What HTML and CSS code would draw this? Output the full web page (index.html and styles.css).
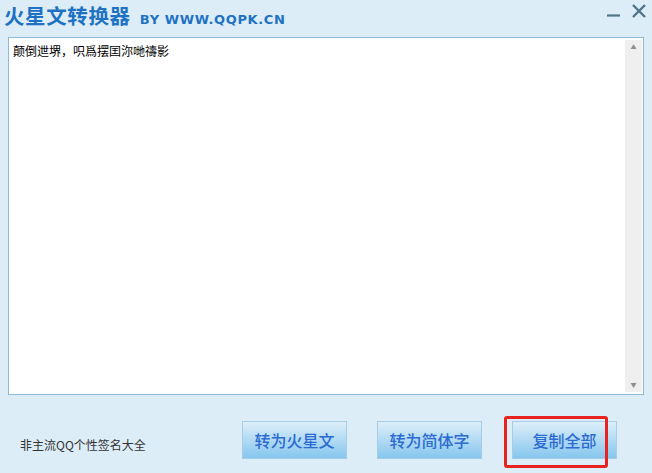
FILE: index.html
```html
<!DOCTYPE html>
<html lang="zh-CN">
<head>
    <meta charset="UTF-8">
    <title>火星文转换器</title>
    <link rel="stylesheet" href="styles.css">
</head>
<body>

<div class="window">
    <div class="titlebar">
        <h1 class="title">火星文转换器 <span class="site">BY WWW.QQPK.CN</span></h1>
        <div class="controls">
            <svg class="ctl" width="16" height="16" viewBox="0 0 16 16">
                <path d="M1 12.5 H14" stroke="#4f7586" stroke-width="2.2"/>
            </svg>
            <svg class="ctl" width="16" height="16" viewBox="0 0 16 16">
                <path d="M2 2 L14 14 M14 2 L2 14" stroke="#4f7586" stroke-width="2.4"/>
            </svg>
        </div>
    </div>

    <div class="editor">
        <div class="text">颠倒迣堺，呮爲摆囯沵哋禱影</div>
        <div class="scrollbar">
            <span class="arrow">▲</span>
            <span class="arrow">▼</span>
        </div>
    </div>

    <div class="footer">
        <span class="link">非主流QQ个性签名大全</span>
        <div class="buttons">
            <button class="btn">转为火星文</button>
            <button class="btn">转为简体字</button>
            <div class="marked">
                <button class="btn">复制全部</button>
                <div class="highlight"></div>
            </div>
        </div>
    </div>
</div>

</body>
</html>
```

FILE: styles.css
```css
body {
    margin: 0;
    background-color: #dcedf8;
    font-family: "Noto Sans CJK SC", "DejaVu Sans", sans-serif;
}

.window {
    width: 652px;
    height: 473px;
    display: flex;
    flex-direction: column;
}

.titlebar {
    height: 37px;
    display: flex;
    justify-content: space-between;
    align-items: flex-start;
}

.title {
    margin: 0;
    padding-left: 4px;
    font-size: 20.5px;
    line-height: 30px;
    font-weight: bold;
    color: #1f72c2;
    letter-spacing: 0.6px;
}

.site {
    font-family: "DejaVu Sans", sans-serif;
    font-size: 13px;
    letter-spacing: 0.6px;
    margin-left: 4px;
}

.controls {
    display: flex;
    gap: 9px;
    padding: 3px 5px 0 0;
}

.editor {
    margin: 0 8px;
    height: 356px;
    background-color: #fff;
    border: 1px solid #8fb8d6;
    display: flex;
}

.text {
    flex: 1;
    padding: 5px 4px;
    font-size: 12px;
    line-height: 16px;
    color: #000;
}

.scrollbar {
    width: 17px;
    margin: 2px 1px 2px 0;
    background-color: #efefef;
    display: flex;
    flex-direction: column;
    justify-content: space-between;
    align-items: center;
}

.arrow {
    font-size: 6px;
    color: #8c8c8c;
    line-height: 14px;
}

.footer {
    flex: 1;
    display: flex;
    align-items: flex-start;
    padding: 26px 0 0 20px;
}

.link {
    font-size: 12px;
    color: #333;
    margin-top: 15px;
    width: 222px;
}

.buttons {
    display: flex;
    gap: 30px;
}

.btn {
    width: 105px;
    height: 38px;
    border: 1px solid #a7cde6;
    background: linear-gradient(#ddeef9, #86c6ee);
    color: #2c6bd0;
    font-family: "Noto Sans CJK SC", sans-serif;
    font-size: 16px;
    font-weight: 500;
    padding: 0;
    cursor: pointer;
}

.marked {
    position: relative;
}

.highlight {
    position: absolute;
    left: -8px;
    top: -5px;
    width: 98px;
    height: 46px;
    border: 3px solid #e8221f;
    border-radius: 3px;
}
```
